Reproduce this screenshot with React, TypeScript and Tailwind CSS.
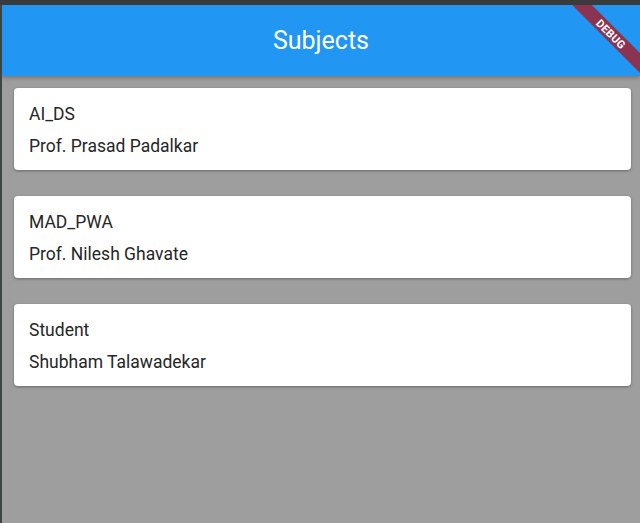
const subjects = [
  { title: "AI_DS", subtitle: "Prof. Prasad Padalkar" },
  { title: "MAD_PWA", subtitle: "Prof. Nilesh Ghavate" },
  { title: "Student", subtitle: "Shubham Talawadekar" },
];

export default function App() {
  return (
    <div className="h-[523px] w-[640px] bg-[#3a3a3a] flex flex-col overflow-hidden font-['Roboto',sans-serif]">
      <div className="h-[5px] shrink-0" />
      <div className="flex flex-1 min-h-0">
        <div className="w-[2px] shrink-0 bg-[#3d4545]" />
        <div className="relative flex-1 flex flex-col bg-[#9e9e9e] overflow-hidden">
          <header className="relative z-10 h-[71px] shrink-0 bg-[#2196f3] flex items-center justify-center shadow-[0_2px_4px_rgba(0,0,0,0.25)]">
            <h1 className="text-white text-[25px] leading-none font-normal">Subjects</h1>
          </header>
          <main className="flex flex-col gap-[26px] pt-3 pl-3 pr-[9px]">
            {subjects.map((s) => (
              <div
                key={s.title}
                className="bg-white rounded-[4px] px-[15px] pt-[14px] pb-[12px] flex flex-col gap-2 shadow-[0_1px_3px_rgba(0,0,0,0.35)]"
              >
                <p className="text-[17.5px] leading-6 text-[#262626]">{s.title}</p>
                <p className="text-[17.5px] leading-6 text-[#262626]">{s.subtitle}</p>
              </div>
            ))}
          </main>
          <div className="absolute left-[549.25px] top-[21.75px] w-[120px] h-[14px] rotate-45 bg-[#8b3452] z-20 flex items-center justify-center">
            <span className="text-white text-[11px] font-bold leading-none tracking-[0.3px]">DEBUG</span>
          </div>
        </div>
      </div>
    </div>
  );
}
